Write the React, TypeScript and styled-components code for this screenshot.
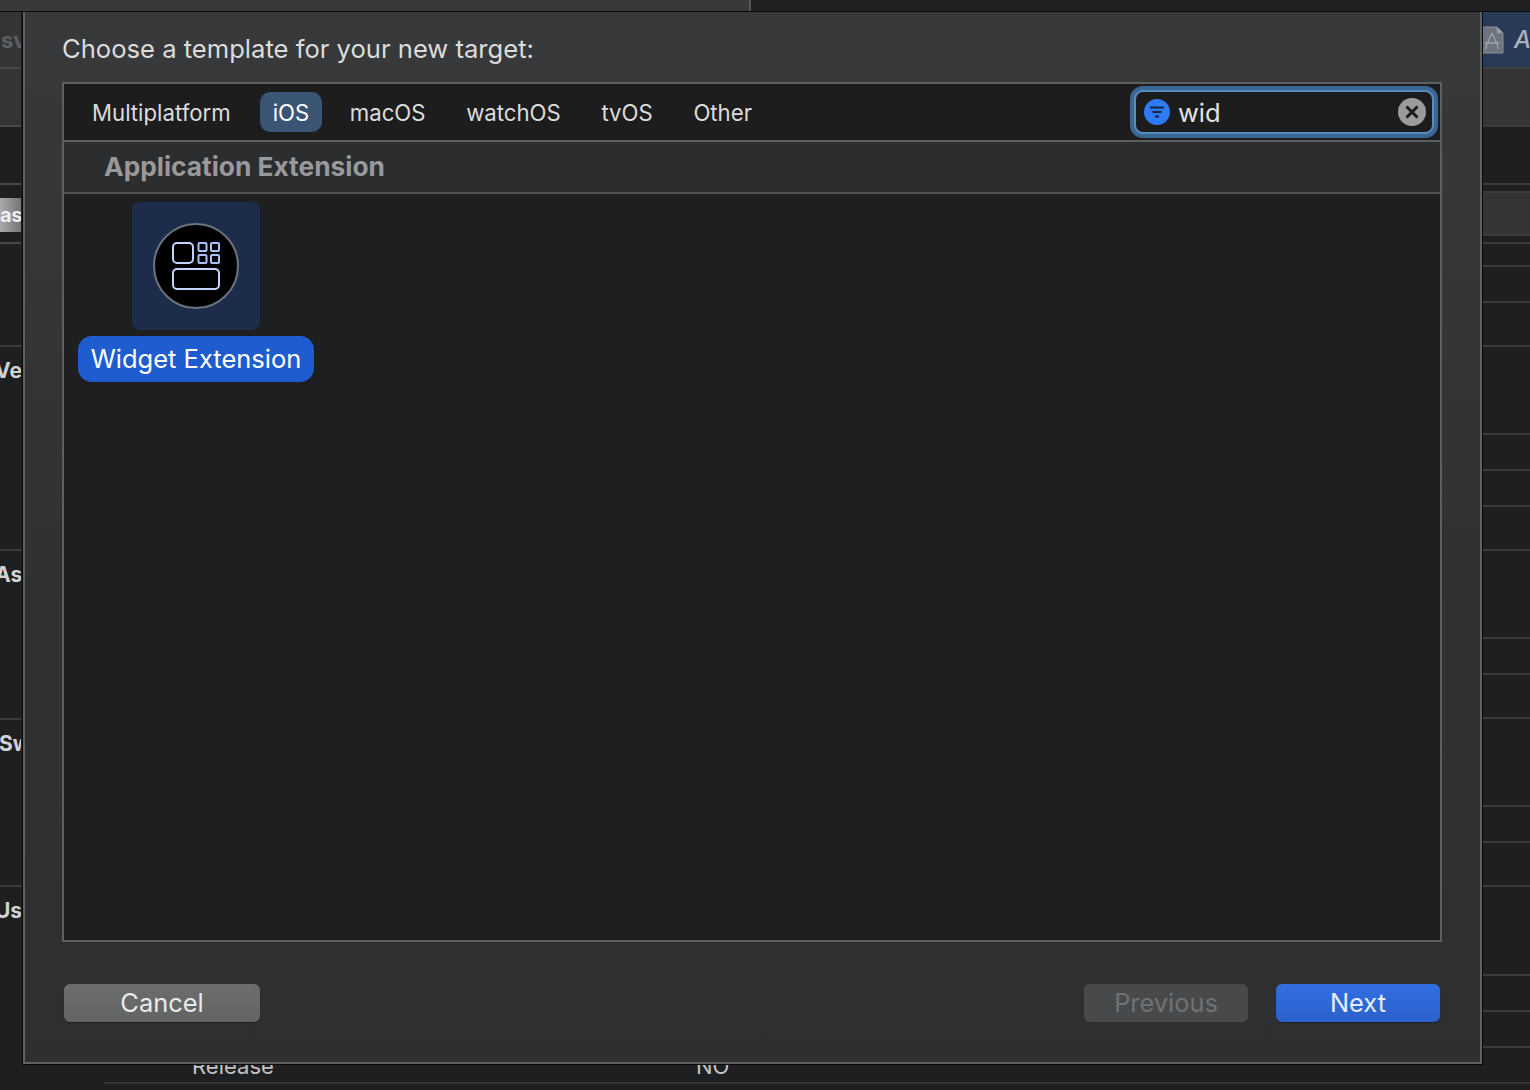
import React from "react";
import styled, { createGlobalStyle } from "styled-components";

const Global = createGlobalStyle`
  html, body { margin: 0; padding: 0; background: #1e1f21; }
  body { font-family: Inter, "Liberation Sans", sans-serif; }
  * { box-sizing: border-box; }
`;

const Screen = styled.div`
  position: relative;
  width: 1530px;
  height: 1090px;
  overflow: hidden;
  display: flex;
  flex-direction: column;
  background: #1e1f21;
`;

const TopBar = styled.div`
  height: 12px;
  display: flex;
  border-bottom: 1px solid #0a0a0b;
`;
const TopLeft = styled.div`
  width: 751px;
  background: #38393b;
  border-right: 2px solid #55565a;
`;
const TopRight = styled.div`
  flex: 1;
  background: #1f2021;
`;

const Behind = styled.div`
  height: 1044px;
  display: flex;
  justify-content: space-between;
`;
const Strip = styled.div<{ $w: number }>`
  width: ${(p) => p.$w}px;
  display: flex;
  flex-direction: column;
  overflow: hidden;
`;

const toneBg: Record<string, string> = {
  dark: "#1e1f21",
  mid: "#333436",
  blue: "#283a55",
};

const SideRow = styled.div<{ $h: number; $tone: string; $line?: string }>`
  height: ${(p) => p.$h}px;
  flex: none;
  display: flex;
  background: ${(p) => toneBg[p.$tone]};
  border-bottom: 2px solid ${(p) => p.$line ?? "#3a3b3d"};
  &:last-child { border-bottom: 0; flex: 1; }
`;

const Faint = styled.span`
  width: 100%;
  align-self: center;
  padding-left: 1px;
  font-size: 22px;
  font-weight: 700;
  line-height: 26px;
  white-space: nowrap;
  color: #5e5f61;
`;
const Heading = styled.span<{ $shift: number }>`
  width: 100%;
  height: 40px;
  margin-left: ${(p) => p.$shift}px;
  padding-top: 11px;
  font-size: 21px;
  font-weight: 700;
  line-height: 26px;
  white-space: nowrap;
  color: #d2d2d3;
`;
const SelectedWrap = styled.div`
  width: 100%;
  padding-top: 13px;
`;
const SelectedBar = styled.div`
  height: 34px;
  display: flex;
  align-items: center;
  overflow: hidden;
  background: linear-gradient(90deg, #ababac, #747476);
  font-size: 20px;
  font-weight: 700;
  letter-spacing: -0.3px;
  color: #f0f0f0;
  white-space: nowrap;
`;
const RightHead = styled.div`
  display: flex;
  align-items: center;
  gap: 10px;
  width: 100%;
  margin-left: -3px;
  font-size: 24px;
  font-style: italic;
  font-weight: 500;
  color: #a9b1bf;
  white-space: nowrap;
  svg { flex: none; }
`;

const ReleaseRow = styled.div`
  height: 28px;
  margin-left: 104px;
  display: flex;
  align-items: flex-start;
  border-bottom: 2px solid #333436;
  font-size: 22px;
  line-height: 20px;
  color: #c2c3c4;
`;
const ReleaseName = styled.span`
  width: 592px;
  padding-left: 88px;
`;

const Dialog = styled.div`
  position: absolute;
  left: 23px;
  top: 12px;
  width: 1459px;
  height: 1052px;
  display: flex;
  flex-direction: column;
  padding: 0 38px 0 37px;
  background: linear-gradient(180deg, #37393b 0%, #2f3032 60%, #2e2f31 100%);
  border: 2px solid #606163;
  border-top: 0;
  box-shadow: 0 0 0 1px #0a0a0b;
`;
const Title = styled.div`
  height: 70px;
  padding-top: 20px;
  font-size: 25.6px;
  line-height: 34px;
  color: #dcdcdd;
  white-space: nowrap;
`;
const Panel = styled.div`
  width: 1380px;
  height: 860px;
  display: flex;
  flex-direction: column;
  border: 2px solid #5e5f60;
  background: #1e1f21;
`;
const TabBar = styled.div`
  height: 58px;
  flex: none;
  display: flex;
  align-items: center;
  gap: 14.6px;
  padding: 0 6px 0 15px;
  background: #1d1d1e;
  border-bottom: 2px solid #5e5f60;
`;
const Tab = styled.div<{ $active?: boolean }>`
  height: 40px;
  padding: 0 13px;
  display: flex;
  align-items: center;
  border-radius: 10px;
  font-size: 22.2px;
  color: ${(p) => (p.$active ? "#ffffff" : "#dcdcdd")};
  background: ${(p) => (p.$active ? "#3a5474" : "transparent")};
  white-space: nowrap;
  &:first-child { margin-right: 1.4px; }
`;
const Search = styled.div`
  margin-left: auto;
  width: 300px;
  height: 44px;
  display: flex;
  align-items: center;
  padding: 0 6px 0 8px;
  border: 2px solid #5b8dbc;
  border-radius: 9px;
  background: #1c1c1d;
  box-shadow: 0 0 0 4px #3a6796;
`;
const SearchText = styled.span`
  flex: 1;
  margin-left: 8px;
  font-size: 25.5px;
  color: #e2e2e2;
`;
const SectionHead = styled.div`
  height: 52px;
  flex: none;
  padding: 0 0 2px 40px;
  display: flex;
  align-items: center;
  background: #2c2d2f;
  border-bottom: 2px solid #505153;
  font-size: 26.3px;
  font-weight: 700;
  color: #98999b;
  white-space: nowrap;
`;
const Content = styled.div`
  flex: 1;
  padding: 8px 0 0 14px;
  display: flex;
  align-items: flex-start;
`;
const Item = styled.div`
  display: flex;
  flex-direction: column;
  align-items: center;
  gap: 6px;
`;
const Tile = styled.div`
  width: 128px;
  height: 128px;
  display: flex;
  align-items: center;
  justify-content: center;
  border-radius: 8px;
  background: #1c2c4a;
`;
const ItemLabel = styled.div`
  width: 236px;
  height: 46px;
  display: flex;
  align-items: center;
  justify-content: center;
  padding-bottom: 2px;
  border-radius: 14px;
  background: #1f5ccf;
  color: #fff;
  font-size: 25.5px;
  white-space: nowrap;
`;
const Footer = styled.div`
  margin-top: 42px;
  padding: 0 2px;
  display: flex;
  gap: 28px;
`;
const variants: Record<string, string> = {
  plain: "background: linear-gradient(180deg,#6c6d6d,#626363); color:#eaeaea; box-shadow: 0 1px 1px rgba(0,0,0,.35);",
  off: "background:#48494a; color:#707172;",
  primary: "background: linear-gradient(180deg,#326fe2,#2a60cb); color:#e6edfb; box-shadow: 0 1px 1px rgba(0,0,0,.35);",
};
const Btn = styled.div<{ $kind: string; $w: number }>`
  width: ${(p) => p.$w}px;
  height: 38px;
  display: flex;
  align-items: center;
  justify-content: center;
  padding-bottom: 2px;
  border-radius: 6px;
  font-size: 25.4px;
  ${(p) => variants[p.$kind]}
  &:first-child { margin-right: auto; }
`;

const leftRows = [
  { h: 57, tone: "mid", line: "#47484a", kind: "faint", text: "sv" },
  { h: 58, tone: "mid", line: "#47484a" },
  { h: 58, tone: "dark", line: "#47484a" },
  { h: 59, tone: "dark", line: "#47484a", kind: "sel", text: "asi" },
  { h: 103, tone: "dark" },
  { h: 204, tone: "dark", kind: "head", text: "Ve", shift: -5 },
  { h: 169, tone: "dark", kind: "head", text: "As", shift: -5 },
  { h: 167, tone: "dark", kind: "head", text: "Sw", shift: -1 },
  { h: 169, tone: "dark", kind: "head", text: "Us", shift: -5 },
];

const rightHeights = [57, 58, 58, 8, 43, 8, 23, 36, 44, 88, 36, 36, 44, 88, 36, 44, 88, 36, 44, 89, 36, 36, 8];
const rightTone = (i: number) => (i === 0 ? "blue" : i === 1 || i === 4 ? "mid" : "dark");

const DocIcon = () => (
  <svg width="24" height="28" viewBox="0 0 24 28" fill="none">
    <path d="M1 1h16l6 6v20H1z" fill="#6d7480" stroke="#8b9099" />
    <path d="M17 1v6h6" fill="#9aa0a8" stroke="#8b9099" />
    <path d="M12 7l-6 13M12 7l6 13M5 17h14M7 20l-2 3M17 20l2 3" stroke="#9ea4ad" strokeWidth="1.3" />
  </svg>
);

const FilterIcon = () => (
  <svg width="26" height="26" viewBox="0 0 26 26">
    <circle cx="13" cy="13" r="13" fill="#2f7bf6" />
    <path d="M6 8.5h14M8.5 13h9M11 17.5h4" stroke="#14233f" strokeWidth="2" />
  </svg>
);

const ClearIcon = () => (
  <svg width="28" height="28" viewBox="0 0 28 28">
    <circle cx="14" cy="14" r="14" fill="#9c9c9c" />
    <path d="M8.5 8.5l11 11M19.5 8.5l-11 11" stroke="#1c1c1d" strokeWidth="3" />
  </svg>
);

const WidgetIcon = () => (
  <svg width="88" height="88" viewBox="0 0 88 88" fill="none">
    <circle cx="44" cy="44" r="42" fill="#000" stroke="#6b7280" strokeWidth="2" />
    <g stroke="#c2d3fc" strokeWidth="2">
      <rect x="21" y="21" width="20" height="20" rx="4" />
      <rect x="21" y="47" width="46" height="20" rx="4" />
    </g>
    <g stroke="#a9c1fa" strokeWidth="2">
      <rect x="46.5" y="21" width="8" height="8" rx="1" />
      <rect x="59" y="21" width="8" height="8" rx="1" />
      <rect x="46.5" y="33" width="8" height="8" rx="1" />
      <rect x="59" y="33" width="8" height="8" rx="1" />
    </g>
  </svg>
);

export default function App() {
  return (
    <Screen>
      <Global />
      <TopBar>
        <TopLeft />
        <TopRight />
      </TopBar>
      <Behind>
        <Strip $w={21}>
          {leftRows.map((r, i) => (
            <SideRow key={i} $h={r.h} $tone={r.tone} $line={r.line}>
              {r.kind === "faint" && <Faint>{r.text}</Faint>}
              {r.kind === "head" && <Heading $shift={r.shift ?? 0}>{r.text}</Heading>}
              {r.kind === "sel" && (
                <SelectedWrap>
                  <SelectedBar>{r.text}</SelectedBar>
                </SelectedWrap>
              )}
            </SideRow>
          ))}
        </Strip>
        <Strip $w={47}>
          {rightHeights.map((h, i) => (
            <SideRow key={i} $h={h} $tone={rightTone(i)} $line={i === 0 ? "#3e4042" : undefined}>
              {i === 0 && (
                <RightHead>
                  <DocIcon />Ap
                </RightHead>
              )}
            </SideRow>
          ))}
        </Strip>
      </Behind>
      <ReleaseRow>
        <ReleaseName>Release</ReleaseName>
        <span>NO</span>
      </ReleaseRow>

      <Dialog>
        <Title>Choose a template for your new target:</Title>
        <Panel>
          <TabBar>
            <Tab>Multiplatform</Tab>
            <Tab $active>iOS</Tab>
            <Tab>macOS</Tab>
            <Tab>watchOS</Tab>
            <Tab>tvOS</Tab>
            <Tab>Other</Tab>
            <Search>
              <FilterIcon />
              <SearchText>wid</SearchText>
              <ClearIcon />
            </Search>
          </TabBar>
          <SectionHead>Application Extension</SectionHead>
          <Content>
            <Item>
              <Tile>
                <WidgetIcon />
              </Tile>
              <ItemLabel>Widget Extension</ItemLabel>
            </Item>
          </Content>
        </Panel>
        <Footer>
          <Btn $kind="plain" $w={196}>Cancel</Btn>
          <Btn $kind="off" $w={164}>Previous</Btn>
          <Btn $kind="primary" $w={164}>Next</Btn>
        </Footer>
      </Dialog>
    </Screen>
  );
}
